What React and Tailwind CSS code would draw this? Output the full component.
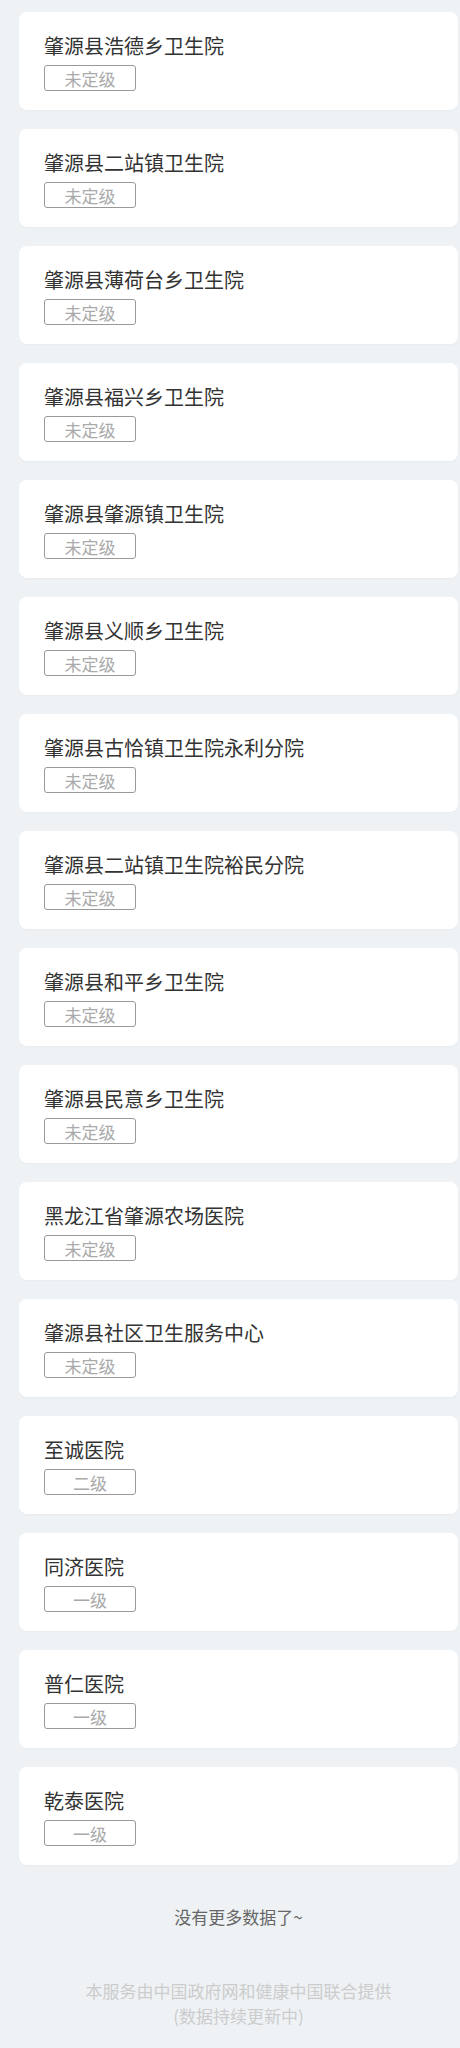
import React from "react";

const items = [
  ["肇源县浩德乡卫生院", "未定级"],
  ["肇源县二站镇卫生院", "未定级"],
  ["肇源县薄荷台乡卫生院", "未定级"],
  ["肇源县福兴乡卫生院", "未定级"],
  ["肇源县肇源镇卫生院", "未定级"],
  ["肇源县义顺乡卫生院", "未定级"],
  ["肇源县古恰镇卫生院永利分院", "未定级"],
  ["肇源县二站镇卫生院裕民分院", "未定级"],
  ["肇源县和平乡卫生院", "未定级"],
  ["肇源县民意乡卫生院", "未定级"],
  ["黑龙江省肇源农场医院", "未定级"],
  ["肇源县社区卫生服务中心", "未定级"],
  ["至诚医院", "二级"],
  ["同济医院", "一级"],
  ["普仁医院", "一级"],
  ["乾泰医院", "一级"],
];

export default function App() {
  return (
    <div
      className="min-h-[2048px] bg-[#eef2f5] pl-[19px] pr-[2px] pt-[12px]"
      style={{ fontFamily: '"Microsoft YaHei", "Noto Sans CJK SC", sans-serif' }}
    >
      <div className="flex flex-col gap-[19px]">
        {items.map(([name, level], i) => (
          <div
            key={i}
            className="h-[98px] rounded-[8px] bg-white pl-[25px] pt-[20px] shadow-[0_1px_2px_rgba(0,0,0,0.03)]"
          >
            <div className="text-[20px] leading-[28px] text-[#333333]">{name}</div>
            <div className="mt-[5px] flex h-[26px] w-[92px] items-center justify-center rounded-[3px] border border-[#999999] text-[17px] leading-none text-[#aaaaaa]">
              {level}
            </div>
          </div>
        ))}
      </div>
      <div className="pt-[40px] text-center text-[17px] leading-[24px] text-[#666666]">
        没有更多数据了~
      </div>
      <div className="pt-[49px] text-center text-[17px] leading-[25px] text-[#cccccc]">
        <div>本服务由中国政府网和健康中国联合提供</div>
        <div>(数据持续更新中)</div>
      </div>
    </div>
  );
}
